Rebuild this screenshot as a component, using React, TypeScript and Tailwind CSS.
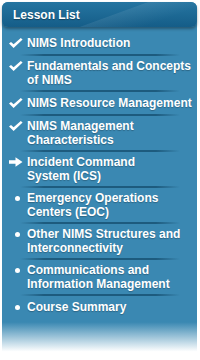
type Status = "done" | "current" | "todo";

interface Lesson {
  title: string;
  status: Status;
}

const lessons: Lesson[] = [
  { title: "NIMS Introduction", status: "done" },
  { title: "Fundamentals and Concepts of NIMS", status: "done" },
  { title: "NIMS Resource Management", status: "done" },
  { title: "NIMS Management Characteristics", status: "done" },
  { title: "Incident Command System\u00a0(ICS)", status: "current" },
  { title: "Emergency Operations Centers (EOC)", status: "todo" },
  { title: "Other NIMS Structures and Interconnectivity", status: "todo" },
  { title: "Communications and Information Management", status: "todo" },
  { title: "Course Summary", status: "todo" },
];

function StatusIcon({ status }: { status: Status }) {
  if (status === "done") {
    return (
      <svg width="14" height="10" viewBox="0 0 14 10" className="ml-[7px]">
        <polygon points="0,5.6 2,3.9 4.6,6.3 11.8,0 13.6,1.4 4.6,10" fill="#ffffff" />
      </svg>
    );
  }
  if (status === "current") {
    return (
      <svg width="14" height="10" viewBox="0 0 14 10" className="ml-[7px]">
        <polygon points="0,3.2 6.5,3.2 6.5,0.2 13.5,5 6.5,9.8 6.5,6.8 0,6.8" fill="#ffffff" />
      </svg>
    );
  }
  return <span className="ml-[13px] block h-[5px] w-[5px] rounded-full bg-white" />;
}

export default function App() {
  return (
    <div
      className="h-[360px] w-[200px] bg-white pt-[2px] pl-[2px]"
      style={{ fontFamily: '"Liberation Sans", Arial, sans-serif' }}
    >
      <div className="flex h-[358px] w-[195px] flex-col rounded-t-md bg-[#3a88b2]">
        <div className="relative flex h-[25px] items-center overflow-hidden rounded-md bg-[linear-gradient(to_bottom,#2575a1,#155d88)] pl-[11px] shadow-[0_2px_3px_rgba(0,0,0,0.35)]">
          <div className="absolute inset-0 bg-[linear-gradient(160deg,transparent_55%,rgba(255,255,255,0.08)_56%,transparent_80%)]" />
          <span className="relative text-[12px] font-bold leading-[14px] text-white [text-shadow:0_1px_1px_rgba(0,0,0,0.35)]">
            Lesson List
          </span>
        </div>

        <ul className="pt-[5px]">
          {lessons.map((lesson, i) => (
            <li key={lesson.title}>
              <div className="flex min-h-[22px] items-center py-[3px]">
                <div className="flex items-start">
                  <div className="flex h-[14px] w-[25px] shrink-0 items-center">
                    <StatusIcon status={lesson.status} />
                  </div>
                  <span className="pr-[4px] text-[12px] font-bold leading-[14px] text-white [text-shadow:0_1px_1px_rgba(0,0,0,0.25)]">
                    {lesson.title}
                  </span>
                </div>
              </div>
              {i < lessons.length - 1 && (
                <div className="mr-[17px] ml-[18px] h-[2px] bg-[linear-gradient(to_right,transparent,#1d5b7e_15%,#1d5b7e_85%,transparent)]" />
              )}
            </li>
          ))}
        </ul>

        <div className="flex-1 bg-[linear-gradient(to_bottom,#3a88b2,#3a88b2_10%,#ffffff_80%)]" />
      </div>
    </div>
  );
}
